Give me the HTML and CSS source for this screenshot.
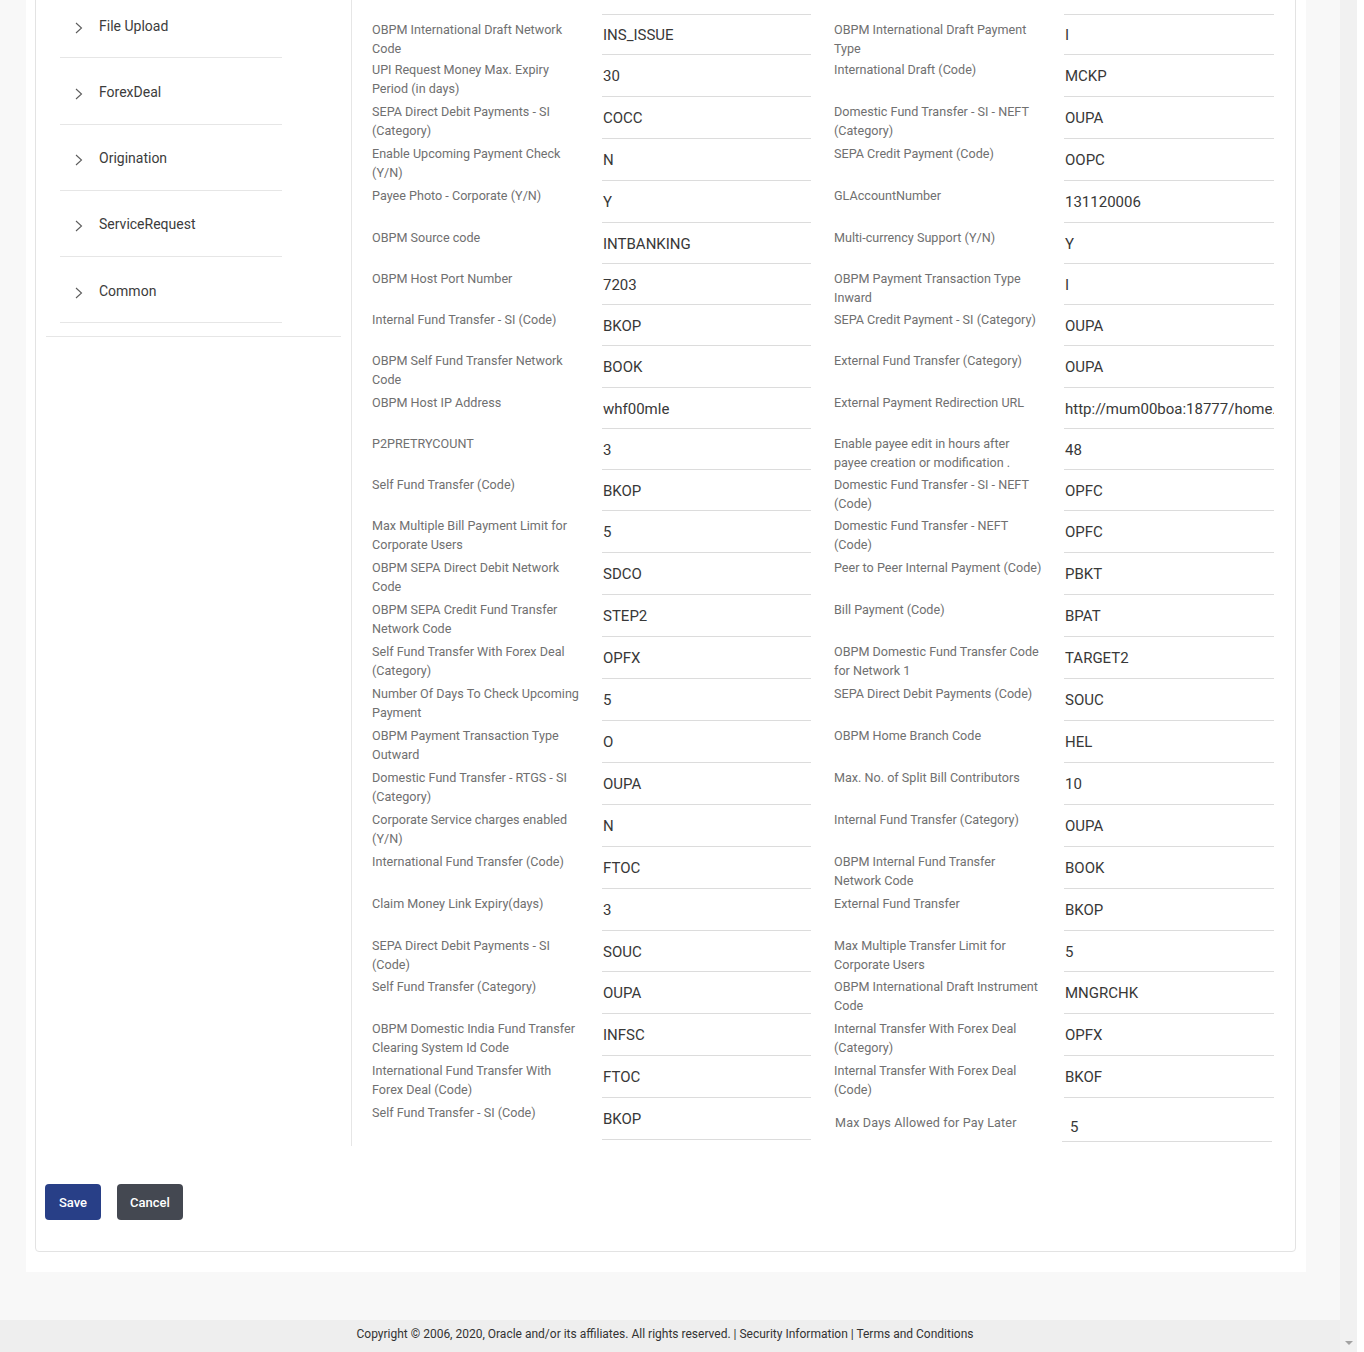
FILE: index.html
```html
<!DOCTYPE html>
<html lang="en">
<head>
<meta charset="utf-8">
<title>Payment Configuration</title>
<link rel="stylesheet" href="styles.css">
</head>
<body>
<div class="shell">
  <div class="page">
    <main class="container">
      <section class="card">
        <div class="card-body">
          <aside class="sidebar">
            <nav class="side-panel">
              <ul class="menu">
                <li class="menu-item"><svg class="chev" viewBox="0 0 10 12" width="10" height="12"><polyline points="2,1 7.5,6 2,11"/></svg><span>File Upload</span></li>
                <li class="menu-item"><svg class="chev" viewBox="0 0 10 12" width="10" height="12"><polyline points="2,1 7.5,6 2,11"/></svg><span>ForexDeal</span></li>
                <li class="menu-item"><svg class="chev" viewBox="0 0 10 12" width="10" height="12"><polyline points="2,1 7.5,6 2,11"/></svg><span>Origination</span></li>
                <li class="menu-item"><svg class="chev" viewBox="0 0 10 12" width="10" height="12"><polyline points="2,1 7.5,6 2,11"/></svg><span>ServiceRequest</span></li>
                <li class="menu-item"><svg class="chev" viewBox="0 0 10 12" width="10" height="12"><polyline points="2,1 7.5,6 2,11"/></svg><span>Common</span></li>
              </ul>
            </nav>
          </aside>
          <div class="content">
            <div class="grid">
              <div class="field"><div class="label">Payee Photo - Retail (Y/N)</div><div class="value">Y</div></div>
              <div class="field"><div class="label">Forex Deal (Category)</div><div class="value">PORTOP</div></div>

              <div class="field field--tight"><div class="label">OBPM International Draft Network Code</div><div class="value">INS_ISSUE</div></div>
              <div class="field field--tight"><div class="label">OBPM International Draft Payment Type</div><div class="value">I</div></div>

              <div class="field"><div class="label">UPI Request Money Max. Expiry Period (in days)</div><div class="value">30</div></div>
              <div class="field"><div class="label">International Draft (Code)</div><div class="value">MCKP</div></div>

              <div class="field"><div class="label">SEPA Direct Debit Payments - SI (Category)</div><div class="value">COCC</div></div>
              <div class="field"><div class="label">Domestic Fund Transfer - SI - NEFT (Category)</div><div class="value">OUPA</div></div>

              <div class="field"><div class="label">Enable Upcoming Payment Check (Y/N)</div><div class="value">N</div></div>
              <div class="field"><div class="label">SEPA Credit Payment (Code)</div><div class="value">OOPC</div></div>

              <div class="field"><div class="label">Payee Photo - Corporate (Y/N)</div><div class="value">Y</div></div>
              <div class="field"><div class="label">GLAccountNumber</div><div class="value">131120006</div></div>

              <div class="field field--short"><div class="label">OBPM Source code</div><div class="value">INTBANKING</div></div>
              <div class="field field--short"><div class="label">Multi-currency Support (Y/N)</div><div class="value">Y</div></div>

              <div class="field field--short"><div class="label">OBPM Host Port Number</div><div class="value">7203</div></div>
              <div class="field field--short"><div class="label">OBPM Payment Transaction Type Inward</div><div class="value">I</div></div>

              <div class="field field--short"><div class="label">Internal Fund Transfer - SI (Code)</div><div class="value">BKOP</div></div>
              <div class="field field--short"><div class="label">SEPA Credit Payment - SI (Category)</div><div class="value">OUPA</div></div>

              <div class="field"><div class="label">OBPM Self Fund Transfer Network Code</div><div class="value">BOOK</div></div>
              <div class="field"><div class="label">External Fund Transfer (Category)</div><div class="value">OUPA</div></div>

              <div class="field field--short"><div class="label">OBPM Host IP Address</div><div class="value">whf00mle</div></div>
              <div class="field field--short"><div class="label">External Payment Redirection URL</div><div class="value">http://mum00boa:18777/home.html</div></div>

              <div class="field field--short"><div class="label">P2PRETRYCOUNT</div><div class="value">3</div></div>
              <div class="field field--short"><div class="label">Enable payee edit in hours after payee creation or modification .</div><div class="value">48</div></div>

              <div class="field field--short"><div class="label">Self Fund Transfer (Code)</div><div class="value">BKOP</div></div>
              <div class="field field--short"><div class="label">Domestic Fund Transfer - SI - NEFT (Code)</div><div class="value">OPFC</div></div>

              <div class="field"><div class="label">Max Multiple Bill Payment Limit for Corporate Users</div><div class="value">5</div></div>
              <div class="field"><div class="label">Domestic Fund Transfer - NEFT (Code)</div><div class="value">OPFC</div></div>

              <div class="field"><div class="label">OBPM SEPA Direct Debit Network Code</div><div class="value">SDCO</div></div>
              <div class="field"><div class="label">Peer to Peer Internal Payment (Code)</div><div class="value">PBKT</div></div>

              <div class="field"><div class="label">OBPM SEPA Credit Fund Transfer Network Code</div><div class="value">STEP2</div></div>
              <div class="field"><div class="label">Bill Payment (Code)</div><div class="value">BPAT</div></div>

              <div class="field"><div class="label">Self Fund Transfer With Forex Deal (Category)</div><div class="value">OPFX</div></div>
              <div class="field"><div class="label">OBPM Domestic Fund Transfer Code for Network 1</div><div class="value">TARGET2</div></div>

              <div class="field"><div class="label">Number Of Days To Check Upcoming Payment</div><div class="value">5</div></div>
              <div class="field"><div class="label">SEPA Direct Debit Payments (Code)</div><div class="value">SOUC</div></div>

              <div class="field"><div class="label">OBPM Payment Transaction Type Outward</div><div class="value">O</div></div>
              <div class="field"><div class="label">OBPM Home Branch Code</div><div class="value">HEL</div></div>

              <div class="field"><div class="label">Domestic Fund Transfer - RTGS - SI (Category)</div><div class="value">OUPA</div></div>
              <div class="field"><div class="label">Max. No. of Split Bill Contributors</div><div class="value">10</div></div>

              <div class="field"><div class="label">Corporate Service charges enabled (Y/N)</div><div class="value">N</div></div>
              <div class="field"><div class="label">Internal Fund Transfer (Category)</div><div class="value">OUPA</div></div>

              <div class="field"><div class="label">International Fund Transfer (Code)</div><div class="value">FTOC</div></div>
              <div class="field"><div class="label">OBPM Internal Fund Transfer Network Code</div><div class="value">BOOK</div></div>

              <div class="field"><div class="label">Claim Money Link Expiry(days)</div><div class="value">3</div></div>
              <div class="field"><div class="label">External Fund Transfer</div><div class="value">BKOP</div></div>

              <div class="field field--short"><div class="label">SEPA Direct Debit Payments - SI (Code)</div><div class="value">SOUC</div></div>
              <div class="field field--short"><div class="label">Max Multiple Transfer Limit for Corporate Users</div><div class="value">5</div></div>

              <div class="field"><div class="label">Self Fund Transfer (Category)</div><div class="value">OUPA</div></div>
              <div class="field"><div class="label">OBPM International Draft Instrument Code</div><div class="value">MNGRCHK</div></div>

              <div class="field"><div class="label">OBPM Domestic India Fund Transfer Clearing System Id Code</div><div class="value">INFSC</div></div>
              <div class="field"><div class="label">Internal Transfer With Forex Deal (Category)</div><div class="value">OPFX</div></div>

              <div class="field"><div class="label">International Fund Transfer With Forex Deal (Code)</div><div class="value">FTOC</div></div>
              <div class="field"><div class="label">Internal Transfer With Forex Deal (Code)</div><div class="value">BKOF</div></div>

              <div class="field"><div class="label">Self Fund Transfer - SI (Code)</div><div class="value">BKOP</div></div>
              <div class="field field--late"><div class="label">Max Days Allowed for Pay Later</div><div class="value">5</div></div>
            </div>
          </div>
        </div>
        <div class="actions">
          <button class="btn btn--primary" type="button">Save</button>
          <button class="btn btn--secondary" type="button">Cancel</button>
        </div>
      </section>
    </main>
    <footer class="footer">Copyright © 2006, 2020, Oracle and/or its affiliates. All rights reserved. | Security Information | Terms and Conditions</footer>
  </div>
  <div class="scrollbar"><span class="scroll-arrow"></span></div>
</div>
</body>
</html>
```

FILE: styles.css
```css
* { box-sizing: border-box; }

html, body {
  margin: 0;
  padding: 0;
}

body {
  background: #ffffff;
  font-family: Roboto, "Liberation Sans", Arial, sans-serif;
  color: #333333;
}

.shell {
  display: flex;
  height: 1352px;
  overflow: hidden;
}

.page {
  width: 1340px;
  flex: none;
  display: flex;
  flex-direction: column;
  background: #f8f8f8;
}

.container {
  margin: -28px 0 0 26px;
  width: 1280px;
  background: #ffffff;
  padding: 0 10px 20px 9px;
}

.card {
  border: 1px solid #e3e3e3;
  border-radius: 4px;
  background: #ffffff;
}

.card-body {
  display: flex;
}

/* sidebar */
.sidebar {
  width: 315px;
  flex: none;
  padding: 0 10px;
}

.side-panel {
  border-bottom: 1px solid #e6e6e6;
  padding: 19px 0 13px 14px;
}

.menu {
  list-style: none;
  margin: 0;
  padding: 0;
  width: 222px;
}

.menu-item {
  display: flex;
  align-items: center;
  height: 66.25px;
  padding: 2px 0 0 14px;
  border-bottom: 1px solid #e6e6e6;
  font-size: 14px;
  line-height: 20px;
  color: #3c3c3c;
}

.chev {
  flex: none;
  margin: 4px 15px 0 0;
  fill: none;
  stroke: #5c5c5c;
  stroke-width: 1.1;
}

/* content */
.content {
  flex: 1;
  border-left: 1px solid #e6e6e6;
  padding: 0 0 4px 20px;
}

.grid {
  display: grid;
  grid-template-columns: 439px 440px;
  column-gap: 23px;
}

.field {
  display: flex;
  align-items: stretch;
  height: 42px;
}

.field--short {
  height: 41px;
}

.field--tight {
  height: 40px;
}

.label {
  width: 230px;
  flex: none;
  padding: 5px 21.5px 0 0;
  font-size: 12.6px;
  line-height: 19px;
  color: #707070;
}

.value {
  flex: 1;
  height: 100%;
  padding: 11px 0 0 1px;
  font-size: 15px;
  line-height: 20px;
  color: #383838;
  border-bottom: 1px solid #dcdcdc;
  white-space: nowrap;
  overflow: hidden;
}

.field--tight .value {
  padding-top: 10px;
}

.field--late {
  height: 44px;
}

.field--late .label {
  padding: 15px 15px 0 1px;
  letter-spacing: 0.15px;
}

.field--late .value {
  margin: 0 2px 0 -2px;
  padding: 19px 0 0 8px;
}

/* actions */
.actions {
  display: flex;
  gap: 16px;
  padding: 38px 9px 31px 9px;
}

.btn {
  height: 36px;
  border: none;
  border-radius: 4px;
  color: #ffffff;
  font-family: Roboto, "Liberation Sans", Arial, sans-serif;
  font-size: 13px;
  font-weight: 500;
  padding: 0;
  cursor: pointer;
}

.btn--primary {
  width: 56px;
  background: #283f87;
}

.btn--secondary {
  width: 66px;
  background: #444851;
}

/* footer */
.footer {
  margin-top: auto;
  height: 32px;
  background: #eeeeee;
  padding: 6px 10px 0 0;
  font-size: 12px;
  line-height: 17px;
  color: #333333;
  text-align: center;
}

/* scrollbar */
.scrollbar {
  width: 17px;
  flex: none;
  background: #f1f1f1;
  display: flex;
  flex-direction: column;
  justify-content: flex-end;
  align-items: center;
  padding-bottom: 7px;
}

.scroll-arrow {
  width: 0;
  height: 0;
  border-left: 4px solid transparent;
  border-right: 4px solid transparent;
  border-top: 4px solid #a3a3a3;
}
```
